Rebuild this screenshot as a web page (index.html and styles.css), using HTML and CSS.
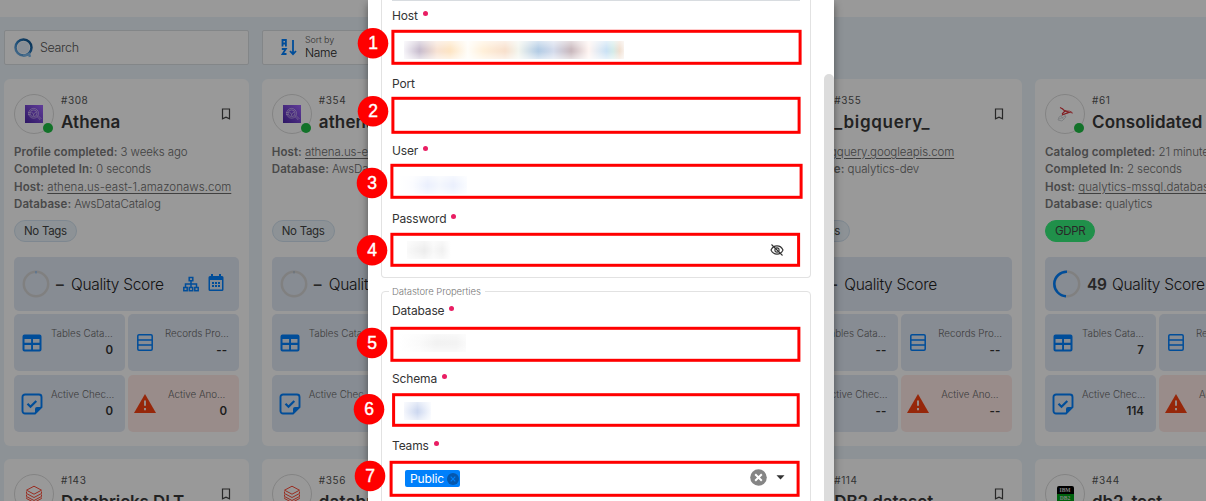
FILE: index.html
```
<!DOCTYPE html>
<html lang="en">
<head>
<meta charset="utf-8">
<title>Datastores</title>
<link rel="stylesheet" href="styles.css">
</head>
<body>
<svg width="0" height="0" class="defs" aria-hidden="true">
  <defs>
    <linearGradient id="violet" x1="0" y1="1" x2="1" y2="0"><stop offset="0" stop-color="#4d27a8"/><stop offset="1" stop-color="#a166ff"/></linearGradient>
    <linearGradient id="ringblue" x1="0" y1="1" x2="1" y2="0"><stop offset="0" stop-color="#7db8ea"/><stop offset=".5" stop-color="#2d7fc4"/><stop offset="1" stop-color="#0a4c84"/></linearGradient>
    <symbol id="athena" viewBox="0 0 18 18"><rect width="18" height="18" fill="url(#violet)"/><g fill="none" stroke="#e0d2f8" stroke-width=".6"><circle cx="8.600" cy="8.300" r="4.900"/><circle cx="8.600" cy="8.300" r="3.400"/><path d="M3 7.500h2M3 9.500h2M6.500 7l2 2.200L11 7M8.600 9v2M12 11.600l3 2.900 1-1-3-3"/></g></symbol>
    <symbol id="bricks" viewBox="0 0 18 18"><g fill="none" stroke="#ff4a36" stroke-width="1"><path d="M1.500 5.200 9 1.200l7.500 4L9 9.200z"/><path d="M1.500 6.500v2L9 12.500l7.500-4v-2M1.500 9.500v2L9 15.500l7.500-4v-2M1.500 12.500v1L9 17.500l7.500-4v-1"/></g></symbol>
    <symbol id="mssql" viewBox="0 0 18 18"><g fill="none"><path d="M3 12l5-3 2 3-4 4-4-1zM5 11l3 4M3 14l7-3" stroke="#c3c8cd" stroke-width=".7"/><path d="M4 2.500c3 1 4 2.500 5 4M6 9l3-3-3-2.500M9 5.500l4 2-7 2.500" stroke="#d9343c" stroke-width="1.100"/><path d="M9 6.500c3-1 6-.5 7.500 1.500-2-.8-5-.8-8 1" stroke="#d9343c" stroke-width=".8"/></g></symbol>
    <symbol id="mark" viewBox="0 0 10 12"><path d="M1.500 1h7v9.800L5 9.200l-3.500 1.600z" fill="none" stroke="#444" stroke-width="1.200"/></symbol>
    <symbol id="table" viewBox="0 0 20 18"><path fill-rule="evenodd" fill="#0080ff" d="M2.500.5h15a2 2 0 0 1 2 2v13a2 2 0 0 1-2 2h-15a2 2 0 0 1-2-2v-13a2 2 0 0 1 2-2zM2.500 5v3.800h6.600V5zM11 5v3.800h6.500V5zM2.500 11v4.400h6.600V11zM11 11v4.400h6.500V11z"/></symbol>
    <symbol id="rows" viewBox="0 0 16 17"><path d="M2 .8h12a1.200 1.200 0 0 1 1.200 1.200v13a1.200 1.200 0 0 1-1.200 1.200H2A1.200 1.200 0 0 1 .8 15V2A1.200 1.200 0 0 1 2 .8zM1 6h14M1 11h14" fill="none" stroke="#0080ff" stroke-width="1.500"/></symbol>
    <symbol id="check" viewBox="0 0 22 22"><path d="M14 20.500H4A2.500 2.500 0 0 1 1.500 18V4A2.500 2.500 0 0 1 4 1.500h14A2.500 2.500 0 0 1 20.500 4v10z" fill="none" stroke="#0080ff" stroke-width="1.900"/><path d="M14 21v-5a2 2 0 0 1 2-2h5z" fill="#0080ff"/><path d="M6.500 10.800l3 3 5.800-5.800" fill="none" stroke="#0080ff" stroke-width="2.200"/></symbol>
    <symbol id="warn" viewBox="0 0 22 19"><path d="M11 0l11 19H0z" fill="#fb4212"/><path d="M11 6.500v5.300M11 14v2.300" stroke="#ffe8e5" stroke-width="2"/></symbol>
    <symbol id="tree" viewBox="0 0 16 16"><g fill="none" stroke="#0080ff" stroke-width="1.500"><rect x="6.200" y="1.500" width="3.600" height="3.200"/><rect x=".8" y="11.500" width="3.400" height="3.200"/><rect x="6.300" y="11.500" width="3.400" height="3.200"/><rect x="11.800" y="11.500" width="3.400" height="3.200"/><path d="M8 5v6M2.500 11V8h11v3"/></g></symbol>
    <symbol id="cal" viewBox="0 0 16 17"><path d="M3 0h2v2h6V0h2v2h1a1.500 1.500 0 0 1 1.500 1.500v12A1.500 1.500 0 0 1 14 17H2a1.500 1.500 0 0 1-1.500-1.500v-12A1.500 1.500 0 0 1 2 2h1z" fill="#0080ff"/><rect x="2" y="6" width="12" height="9.500" fill="#e2e9f5"/><path d="M4 9h2M7 9h2M10 9h2M4 12h2M7 12h2M10 12h2" stroke="#0080ff" stroke-width="1.800"/></symbol>
  </defs>
</svg>

<div class="app">
  <header class="topbar"></header>
  <div class="toolbar">
    <div class="box search">
      <svg width="20" height="20" viewBox="0 0 20 20"><circle cx="9.500" cy="9.500" r="6" fill="#e4eefb"/><circle cx="9.500" cy="9.500" r="8" fill="none" stroke="url(#ringblue)" stroke-width="2.500"/><path d="M9 17.500c3 0 5-1 6-1.500l1 2.800" fill="none" stroke="#7db8ea" stroke-width="2.500"/></svg>
      <span class="placeholder">Search</span>
    </div>
    <div class="box sort">
      <svg width="16" height="17" viewBox="0 0 16 17"><g fill="none" stroke="#0080ff" stroke-width="1.800"><path d="M1.500 7.500v-6.500h3.400v6.500M1.500 4.500h3.400M.8 10h4L1.500 15h4"/><path d="M12 1v13M9 12l3 3.200 3-3.200"/></g></svg>
      <div class="sort-text"><span class="tiny">Sort by</span><span class="sort-value">Name</span></div>
    </div>
  </div>

  <main class="cards">
    <article class="card">
      <div class="head"><div class="avatar"><svg width="18" height="18"><use href="#athena"/></svg><i></i></div><div class="names"><span class="num">#308</span><span class="title">Athena</span></div><svg class="bm" width="10" height="12"><use href="#mark"/></svg></div>
      <div class="meta"><p><b>Profile completed:</b> 3 weeks ago</p><p><b>Completed In:</b> 0 seconds</p><p><b>Host:</b> <u class="long">athena.us-east-1.amazonaws.com</u></p><p><b>Database:</b> AwsDataCatalog</p></div>
      <span class="tag">No Tags</span>
      <div class="quality"><svg class="ring" width="28" height="28" viewBox="0 0 28 28"><circle cx="14" cy="14" r="12.200" class="track"/><path d="M14 1v2.500" stroke="#70b4ff"/></svg><strong class="dash">–</strong><span>Quality Score</span><svg class="tree" width="16" height="16"><use href="#tree"/></svg><svg class="cal" width="16" height="17"><use href="#cal"/></svg></div>
      <div class="tiles">
        <div class="tile"><svg width="20" height="18"><use href="#table"/></svg><div><span>Tables Cata...</span><b>0</b></div></div>
        <div class="tile"><svg width="16" height="17"><use href="#rows"/></svg><div><span>Records Pro...</span><b>--</b></div></div>
        <div class="tile"><svg width="22" height="22"><use href="#check"/></svg><div><span>Active Chec...</span><b>0</b></div></div>
        <div class="tile bad"><svg width="22" height="19"><use href="#warn"/></svg><div><span>Active Ano...</span><b>0</b></div></div>
      </div>
    </article>
    <article class="card">
      <div class="head"><div class="avatar"><svg width="18" height="18"><use href="#athena"/></svg><i></i></div><div class="names"><span class="num">#354</span><span class="title">athena</span></div></div>
      <div class="meta"><p><b>Host:</b> <u>athena.us-east</u></p><p><b>Database:</b> AwsData</p></div>
      <span class="tag">No Tags</span>
      <div class="quality"><svg class="ring" width="28" height="28" viewBox="0 0 28 28"><circle cx="14" cy="14" r="12.200" class="track"/><path d="M14 1v2.500" stroke="#a0b4c8"/></svg><strong class="dash">–</strong><span>Quality</span></div>
      <div class="tiles">
        <div class="tile"><svg width="20" height="18"><use href="#table"/></svg><div><span>Tables Cata...</span></div></div>
        <div class="tile"></div>
        <div class="tile"><svg width="22" height="22"><use href="#check"/></svg><div><span>Active Chec...</span></div></div>
        <div class="tile bad"></div>
      </div>
    </article>
    <article class="card"></article>
    <article class="card">
      <div class="head"><div class="avatar"></div><div class="names"><span class="num">#355</span><span class="title t-big">_bigquery_</span></div><svg class="bm" width="10" height="12"><use href="#mark"/></svg></div>
      <div class="meta"><p><b>Host:</b> <u>bigquery.googleapis.com</u></p><p><b>Database:</b> qualytics-dev</p></div>
      <span class="tag">No Tags</span>
      <div class="quality"><svg class="ring" width="28" height="28"></svg><strong class="dash">–</strong><span>Quality Score</span></div>
      <div class="tiles">
        <div class="tile"><svg width="20" height="18"><use href="#table"/></svg><div><span>Tables Cata...</span><b>--</b></div></div>
        <div class="tile"><svg width="16" height="17"><use href="#rows"/></svg><div><span>Records Pro...</span><b>--</b></div></div>
        <div class="tile"><svg width="22" height="22"><use href="#check"/></svg><div><span>Active Chec...</span><b>--</b></div></div>
        <div class="tile bad"><svg width="22" height="19"><use href="#warn"/></svg><div><span>Active Ano...</span><b>--</b></div></div>
      </div>
    </article>
    <article class="card">
      <div class="head"><div class="avatar"><svg width="18" height="18"><use href="#mssql"/></svg><i></i></div><div class="names"><span class="num">#61</span><span class="title">Consolidated</span></div></div>
      <div class="meta"><p><b>Catalog completed:</b> 21 minutes</p><p><b>Completed In:</b> 2 seconds</p><p><b>Host:</b> <u class="long">qualytics-mssql.database</u></p><p><b>Database:</b> qualytics</p></div>
      <span class="tag gdpr">GDPR</span>
      <div class="quality"><svg class="ring" width="28" height="28" viewBox="0 0 28 28"><circle cx="14" cy="14" r="12.200" class="track"/><path d="M14 1.800A12.200 12.200 0 1 0 13 26.200" fill="none" stroke="#0080ff" stroke-width="2.500"/></svg><strong class="dash score">49</strong><span>Quality Score</span></div>
      <div class="tiles">
        <div class="tile"><svg width="20" height="18"><use href="#table"/></svg><div><span>Tables Cata...</span><b>7</b></div></div>
        <div class="tile"><svg width="16" height="17"><use href="#rows"/></svg><div><span>Records Pro...</span></div></div>
        <div class="tile"><svg width="22" height="22"><use href="#check"/></svg><div><span>Active Chec...</span><b>114</b></div></div>
        <div class="tile bad"><svg width="22" height="19"><use href="#warn"/></svg><div><span>Active Ano...</span></div></div>
      </div>
    </article>

    <article class="card"><div class="head"><div class="avatar"><svg width="18" height="18"><use href="#bricks"/></svg></div><div class="names"><span class="num">#143</span><span class="title t-next">Databricks DLT</span></div><svg class="bm" width="10" height="12"><use href="#mark"/></svg></div></article>
    <article class="card"><div class="head"><div class="avatar"><svg width="18" height="18"><use href="#bricks"/></svg></div><div class="names"><span class="num">#356</span><span class="title">databricks</span></div></div></article>
    <article class="card"></article>
    <article class="card"><div class="head"><div class="avatar"></div><div class="names"><span class="num">#114</span><span class="title t-next">DB2 dataset</span></div><svg class="bm" width="10" height="12"><use href="#mark"/></svg></div></article>
    <article class="card"><div class="head"><div class="avatar"><div class="ibm"><span>IBM</span><span>DB2</span></div></div><div class="names"><span class="num">#344</span><span class="title t-next">db2_test</span></div></div></article>
  </main>
</div>

<div class="scrim"></div>

<section class="dialog">
  <div class="form">
    <div class="group connection">
      <div class="field"><label>Host<i></i></label><div class="value"><span class="mask host"></span></div></div>
      <div class="field"><label>Port</label><div class="value"></div></div>
      <div class="field"><label>User<i></i></label><div class="value"><span class="mask user"></span></div></div>
      <div class="field"><label>Password<i></i></label><div class="value password"><span class="mask pass"></span>
        <svg class="eye" width="14" height="12" viewBox="0 0 14 12"><g fill="none" stroke="#333" stroke-width="1.100"><path d="M1 6c2.500-5.500 9.500-5.500 12 0-2.500 5.500-9.500 5.500-12 0z"/><circle cx="7" cy="6" r="2.100"/><path d="M1.500.5l11 11"/></g></svg></div></div>
    </div>
    <div class="group properties">
      <span class="legend">Datastore Properties</span>
      <div class="field"><label>Database<i></i></label><div class="value"><span class="mask database"></span></div></div>
      <div class="field"><label>Schema<i></i></label><div class="value"><span class="mask schema"></span></div></div>
      <div class="field"><label>Teams<i></i></label><div class="value teams"><span class="chip">Public<svg width="12" height="12" viewBox="0 0 12 12"><circle cx="6" cy="6" r="6" fill="#0558ae"/><path d="M3.700 3.700l4.600 4.600M8.300 3.700L3.700 8.300" stroke="#0080fb" stroke-width="1.100"/></svg></span>
        <svg class="clear" width="17" height="17" viewBox="0 0 17 17"><circle cx="8.500" cy="8.500" r="8.300" fill="#858585"/><path d="M5.200 5.200l6.600 6.600M11.800 5.200l-6.600 6.600" stroke="#fff" stroke-width="2"/></svg>
        <svg width="9" height="5" viewBox="0 0 9 5"><path d="M.5.300h8L4.500 4.600z" fill="#333"/></svg></div></div>
    </div>
  </div>
  <div class="scroll"></div>
</section>

<svg class="callouts" width="1206" height="501" viewBox="0 0 1206 501">
  <g class="frames">
    <rect x="392.900" y="31.300" width="407.200" height="32"/>
    <rect x="392.900" y="98.300" width="406.200" height="34"/>
    <rect x="391.900" y="165.300" width="409.200" height="32"/>
    <rect x="391.900" y="234.300" width="406.700" height="31"/>
    <rect x="391.900" y="328.300" width="407" height="32"/>
    <rect x="393.600" y="394.700" width="404.600" height="30.600"/>
    <rect x="391.100" y="462.300" width="407" height="33"/>
  </g>
  <g class="balls">
    <circle cx="373" cy="43.300" r="15.300"/><circle cx="373" cy="111.300" r="15.300"/><circle cx="372" cy="183" r="15.300"/><circle cx="372" cy="250.300" r="15.300"/><circle cx="372" cy="343" r="15.300"/><circle cx="369" cy="409.300" r="15.300"/><circle cx="370" cy="476" r="15.300"/>
  </g>
  <g class="digits">
    <text x="373" y="49">1</text><text x="373" y="117">2</text><text x="372" y="189">3</text><text x="372" y="256">4</text><text x="372" y="349">5</text><text x="369" y="415">6</text><text x="370" y="482">7</text>
  </g>
</svg>
</body>
</html>
```
FILE: styles.css
```
* { box-sizing: border-box; }
body { margin: 0; width: 1206px; height: 501px; overflow: hidden; position: relative; font-family: Inter, "Open Sans", sans-serif; color: #333; background: #ebf4fa; }
.defs { position: absolute; }
svg { flex: none; display: block; }
p { margin: 0; }

.app { width: 1206px; height: 501px; overflow: hidden; }
.topbar { height: 17px; background: #fff; }
.toolbar { display: flex; gap: 13px; padding: 13px 0 14px 4px; }
.box { width: 245px; height: 35px; background: #fff; border: 1px solid #dbdfe3; border-radius: 2px; display: flex; align-items: center; }
.search { padding-left: 9px; gap: 6px; }
.placeholder { font-size: 12.500px; font-weight: 300; color: #555; letter-spacing: -.35px; margin-top: -1px; }
.sort { padding-left: 18px; gap: 8px; }
.sort-text { display: flex; flex-direction: column; margin-top: -1px; }
.tiny { font-size: 9px; line-height: 12px; font-weight: 300; color: #555; letter-spacing: -.1px; }
.sort-value { font-size: 12px; line-height: 14px; font-weight: 300; color: #222; letter-spacing: -.3px; }

.cards { display: grid; grid-template-columns: repeat(5, 245px); grid-auto-rows: 367px; gap: 13px 12.750px; padding-left: 4px; width: 1290px; }
.card { background: #fff; border-radius: 6px; padding: 15px 10px 0; display: flex; flex-direction: column; align-items: flex-start; }
.head { display: flex; width: 225px; height: 48px; flex: none; }
.avatar { width: 40px; height: 40px; border: 1px solid #dcdcdc; border-radius: 50%; display: flex; align-items: center; justify-content: center; position: relative; flex: none; }
.avatar i { position: absolute; right: 0; bottom: 0; width: 10px; height: 10px; border-radius: 50%; background: #1fbf45; }
.names { display: flex; flex-direction: column; padding-left: 7px; flex: 1; min-width: 0; }
.num { font-size: 10px; line-height: 13px; letter-spacing: .6px; color: #555; }
.title { font-size: 17px; font-weight: 600; line-height: 30px; white-space: nowrap; color: #3a3a3a; letter-spacing: .15px; }
.t-big { letter-spacing: .7px; }
.t-next { letter-spacing: -.1px; }
.bm { margin: 14px 8px 0 0; }
.meta { flex: none; height: 78px; padding-top: 1.700px; font-size: 11.500px; line-height: 17.600px; color: #6c6c6c; font-weight: 300; white-space: nowrap; letter-spacing: -.09px; }
.meta b { font-weight: 600; color: #7a7a7a; letter-spacing: .1px; }
.meta u { text-underline-offset: 2px; }
.meta .long { letter-spacing: .03px; }
.tag { flex: none; height: 22px; padding: 0 9px; line-height: 20px; font-size: 11.500px; letter-spacing: -.3px; border: 1px solid #d3e2f0; border-radius: 11px; background: #ebf4fa; color: #444; }
.gdpr { background: #36f07c; border-color: #36f07c; }
.quality { margin-top: 15px; width: 225px; height: 54px; background: #e2e9f5; border-radius: 5px; display: flex; align-items: center; padding-left: 8px; font-size: 15.500px; font-weight: 300; color: #222; letter-spacing: -.3px; flex: none; }
.track { fill: none; stroke: #d6d6d6; stroke-width: 2.500; }
.dash { width: 15px; margin-left: 6px; font-weight: 600; color: #444; }
.score { width: 25px; }
.tree { margin-left: auto; }
.cal { margin: 0 15px 3px 9px; }
.tiles { flex: none; display: grid; grid-template-columns: 111px 111px; grid-auto-rows: 57px; gap: 4px 3px; margin-top: 3px; }
.tile { background: #e2e9f5; border-radius: 5px; display: flex; align-items: center; justify-content: space-between; padding: 0 12px 0 8px; }
.tile:nth-child(3) { padding-left: 7px; }
.tile.bad { background: #ffeae7; padding-left: 6px; }
.tile:nth-child(2) > svg { margin-left: 1px; }
.tile div { width: 62px; height: 34px; display: flex; flex-direction: column; align-items: flex-end; white-space: nowrap; }
.tile span { font-size: 9.800px; line-height: 15px; font-weight: 300; color: #666; letter-spacing: 0; width: 62px; }
.tile.bad span { width: 59px; }
.tile b { font-size: 11.500px; line-height: 18px; font-weight: 600; color: #333; }
.ibm { width: 17px; height: 17px; border-radius: 2px; overflow: hidden; background: linear-gradient(#000 47%, #00a318 47%); color: #ddd; display: flex; flex-direction: column; align-items: center; font: 700 5.500px/8px "Liberation Serif", serif; }

.scrim { position: absolute; inset: 0; background: rgba(0, 0, 0, .4); }

.dialog { position: absolute; left: 368px; top: 0; width: 466px; height: 501px; background: #fff; box-shadow: 0 4px 8px rgba(0, 0, 0, .45); display: flex; justify-content: space-between; overflow: visible; }
.form { padding-left: 13px; width: 443px; height: 501px; overflow: hidden; }
.group { border: 1px solid #e2e2e2; width: 430px; padding: 0 10px; }
.connection { height: 278px; border-top: 0; border-radius: 0 0 4px 4px; }
.connection::before { content: ""; display: block; height: 1px; width: 408px; background: #d8dce0; margin-bottom: 7px; }
.properties { margin-top: 13px; height: 240px; border-radius: 4px; position: relative; padding-top: 11px; }
.legend { position: absolute; left: 7px; top: -7px; background: #fff; padding: 0 4px 0 3px; font: 300 9.500px/13px Inter, sans-serif; letter-spacing: -.06px; color: #777; white-space: nowrap; }
.field { height: 67.500px; }
.field label { display: flex; height: 16px; font: 400 12px/16px Inter, sans-serif; color: #333; letter-spacing: -.15px; }
.field label i { width: 5px; height: 5px; margin: 3px 0 0 5px; border-radius: 50%; background: #e91e63; }
.value { height: 35px; margin-top: 8px; width: 408px; display: flex; align-items: center; }
.mask { height: 18px; display: block; -webkit-mask-image: linear-gradient(rgba(0,0,0,.5), #000 45%, #000 60%, rgba(0,0,0,.45)); mask-image: linear-gradient(rgba(0,0,0,.5), #000 45%, #000 60%, rgba(0,0,0,.45)); }
.host { width: 220px; margin: 0 0 0 12px; background: linear-gradient(90deg, #f5f3f8 0, #c8bdce 7%, #f8e3d4 15%, #fde5c4 21%, #fffdf8 29%, #fff0da 36%, #f8e0cd 46%, #f3f5ee 52%, #b3cce5 61%, #d5dcec 68%, #c9b8bd 76%, #fff5f2 84%, #cbe2f5 92%, #d5ebe9 95%, #f0e0d2 98%, #f8f0ea); }
.user { width: 68px; margin-left: 7px; background: linear-gradient(90deg, #fff, #fbfcff 20%, #ebf0fd 42%, #f4f7fd 60%, #ebf0fd 80%, #fafcff); }
.password { margin-top: 6px; }
.pass { width: 44px; margin-left: 15px; background: linear-gradient(90deg, #f9f9f9, #ededed 40%, #f8f8f8 60%, #f1f1f1 80%, #fff); }
.eye { margin-left: auto; margin-right: 16px; }
.database { width: 66px; margin: -3px 0 0 8px; background: linear-gradient(90deg, #fff, #fafafa 30%, #f2f2f2 55%, #f3f3f3 85%, #fafafa); }
.schema { width: 27px; margin: -2px 0 0 12px; background: linear-gradient(90deg, #f4f6fc, #cdd8f0 50%, #f8fafe); }
.chip { margin: 2px auto 0 13px; height: 17px; background: #0080fb; color: #fff; border-radius: 2px; font-size: 12px; letter-spacing: -.15px; line-height: 17px; padding: 0 1px 0 5px; display: flex; align-items: center; gap: 3px; }
.clear { margin-right: 9px; }
.teams { padding-right: 15px; margin-top: 6px; }
.scroll { width: 10px; margin-top: 74px; height: 427px; background: #dcdcdc; border-radius: 5px 5px 0 0; }

.callouts { position: absolute; left: 0; top: 0; pointer-events: none; }
.frames { fill: none; stroke: #f00; stroke-width: 3; }
.balls { fill: #f00; }
.digits { fill: #fff; stroke: #fff; stroke-width: .4; font: 17.500px "Liberation Sans", Arial, sans-serif; text-anchor: middle; }
```
